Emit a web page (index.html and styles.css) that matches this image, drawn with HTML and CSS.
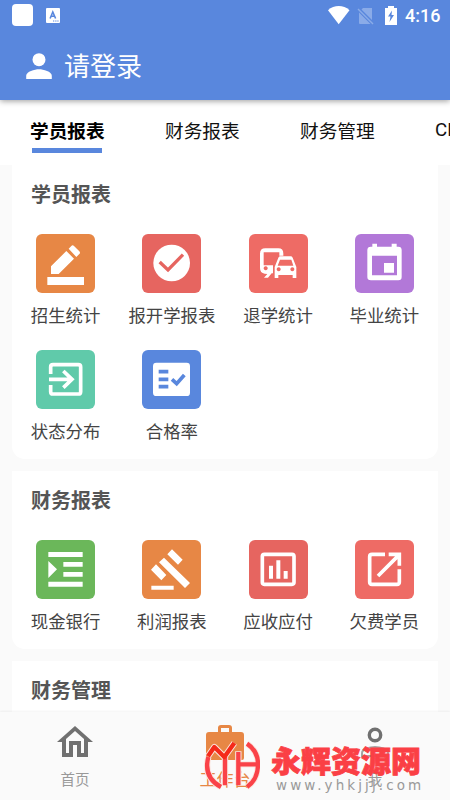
FILE: index.html
```html
<!DOCTYPE html>
<html lang="zh-CN">
<head>
<meta charset="utf-8">
<title>工作台</title>
<link rel="stylesheet" href="styles.css">
</head>
<body>
<div class="app">
  <header class="header">
    <div class="status">
      <span class="status-app"></span>
      <svg class="status-a" viewBox="0 0 14 15"><rect width="14" height="15" rx="1" fill="#fff"/><path d="M4.1 10.5 6.8 4l2.8 6.5M5 8.3h3.7" fill="none" stroke="#5987dd" stroke-width="1.6"/><path d="M7 13h1.3M9.2 13h1.3M11.3 13h1.3" stroke="#5987dd"/></svg>
      <svg class="status-icons" viewBox="0 0 70 20">
        <path d="M0 4.2C6-1.3 15.500-1.300 21.500 4.200L10.700 18.300Z" fill="#fff"/>
        <path d="M33.500 3.500 35 2H44V14ZM31 6.500 42.500 18H32q-1 0-1-1Z" fill="#8aabe8"/><path d="M30 3 45 18" stroke="#8aabe8" stroke-width="1.400"/>
        <path d="M57 2h3V0h6v2h3v17H57Z" fill="#fff"/><path d="M64 4.500 60 10.500h2.500L61.500 16l4.500-7h-2.500Z" fill="#5987dd"/>
      </svg>
      <span class="clock">4:16</span>
    </div>
    <div class="user">
      <svg class="user-icon" viewBox="0 0 26 27"><circle cx="13" cy="6.700" r="6.500" fill="#fff"/><path d="M.2 26v-3.200c0-4.300 8.500-6.500 12.800-6.500s12.800 2.200 12.800 6.500V26Z" fill="#fff"/></svg>
      <span>请登录</span>
    </div>
  </header>
  <nav class="tabs">
    <span class="tab active">学员报表</span>
    <span class="tab">财务报表</span>
    <span class="tab">财务管理</span>
    <span class="tab">CRM</span>
  </nav>
  <main class="content">
    <section class="card first">
      <h2>学员报表</h2>
      <div class="grid">
        <div class="item"><svg class="tile orange" viewBox="0 0 177 177"><path d="M34 129h110v24H34ZM45 120V97L91 51l23 23-46 46ZM98 44l8-8q4-4 8 0l16 16q4 4 0 8l-9 9Z" fill="#fff"/></svg><span>招生统计</span></div>
        <div class="item"><svg class="tile red" viewBox="0 0 177 177"><circle cx="89" cy="87" r="55" fill="#fff"/><path d="M53 84 78 108 123 62" fill="none" stroke="#e66560" stroke-width="10"/></svg><span>报开学报表</span></div>
        <div class="item"><svg class="tile coral" viewBox="0 0 177 177"><path fill-rule="evenodd" d="M103 65V59q0-16-15-16H49q-16 0-16 16v43q0 15 14 17l8 1-10 11h12l11-13h4V94H44V55h47v10ZM50 97a6 6 0 1 0 .1 0Z" fill="#fff"/><path fill-rule="evenodd" d="m88 71-11 28v33h11v-9h43v9h11V99l-11-28q-2-4-6-4H94q-4 0-6 4Zm5 6h34l6 18H86ZM89 100a6 6 0 1 0 .1 0ZM130 100a6 6 0 1 0 .1 0Z" fill="#fff"/></svg><span>退学统计</span></div>
        <div class="item"><svg class="tile purple" viewBox="0 0 177 177"><path fill-rule="evenodd" d="M52 29h14v9h44v-9h15v9h5q10 0 10 10v81q0 10-10 10H48q-11 0-11-10V48q0-10 11-10h4ZM51 65v59h75V65Z" fill="#fff"/><path d="M87 87h30v29H87Z" fill="#fff"/></svg><span>毕业统计</span></div>
        <div class="item"><svg class="tile teal" viewBox="0 0 177 177"><path d="M44 72V51q0-7 7-7h76q7 0 7 7v74q0 7-7 7H51q-7 0-7-7V105M39 88h68M82 63l26 25-26 25" fill="none" stroke="#fff" stroke-width="11"/></svg><span>状态分布</span></div>
        <div class="item"><svg class="tile blue" viewBox="0 0 177 177"><rect x="33" y="38" width="111" height="100" rx="10" fill="#fff"/><path d="M50 65h29M50 88h29M50 110h29M90 88l14 13 23-26" fill="none" stroke="#5987dd" stroke-width="11"/></svg><span>合格率</span></div>
      </div>
    </section>
    <section class="card second">
      <h2>财务报表</h2>
      <div class="grid">
        <div class="item"><svg class="tile green" viewBox="0 0 177 177"><path d="M37 36h103v15H37ZM82 66h58v14H82ZM82 96h58v14H82ZM37 125h103v15H37ZM37 63v51l26-26Z" fill="#fff"/></svg><span>现金银行</span></div>
        <div class="item"><svg class="tile orange" viewBox="0 0 177 177"><path d="M28 137h67v12H28ZM66 53l78 76-15 15L51 67ZM90 28l32 31-14 15-32-31ZM42 73l31 32-15 16-31-32Z" fill="#fff"/></svg><span>利润报表</span></div>
        <div class="item"><svg class="tile red" viewBox="0 0 177 177"><rect x="40" y="43" width="95" height="90" rx="6" fill="none" stroke="#fff" stroke-width="11"/><path d="M66 77v39M88 61v55M110 93v23" stroke="#fff" stroke-width="12"/></svg><span>应收应付</span></div>
        <div class="item"><svg class="tile coral" viewBox="0 0 177 177"><path d="M90 43H51q-7 0-7 7v76q0 7 7 7h75q7 0 7-7V88M101 43h32v34M69 108 130 47" fill="none" stroke="#fff" stroke-width="11"/></svg><span>欠费学员</span></div>
      </div>
    </section>
    <section class="card third"><h2>财务管理</h2></section>
  </main>
  <footer class="bottom">
    <div class="nav-item"><svg class="nav-icon" viewBox="0 0 36 36"><path fill-rule="evenodd" d="M18 1 36 17h-5v15H20V20h-4v12H5V17H0ZM18 6 9 14v14h3V16h12v12h3V14Z" fill="#707070"/></svg><span>首页</span></div>
    <div class="nav-item current"><svg class="nav-icon wide" viewBox="0 0 38 36"><path fill-rule="evenodd" d="M12 7V3q0-3 3-3h8q3 0 3 3v4h9q3 0 3 3v23q0 2-2 2H2q-2 0-2-2V10q0-3 3-3ZM15 3v4h8V3Z" fill="#e78745"/></svg><span>工作台</span></div>
    <div class="nav-item"><svg class="nav-icon" viewBox="0 0 36 36"><circle cx="18" cy="10" r="5.700" fill="none" stroke="#707070" stroke-width="3.400"/><path d="M5 31v-3c0-4 8-6 13-6s13 2 13 6v3Z" fill="none" stroke="#a4a4a4" stroke-width="2"/></svg><span>我</span></div>
  </footer>
  <div class="watermark">
    <svg class="wm-logo" viewBox="0 0 168 150"><g fill="none" stroke-linejoin="round"><g stroke="#fbe5df" stroke-width="19"><path d="M13 51Q-3 112 51 141M129 11q33 22 33 61 0 47-33 69M12 49 31 21 61 51 91 9M63 50v86M103 34v102M103 73h55"/></g><g stroke="#fa4248" stroke-width="13"><path d="M13 51Q-3 112 51 141M129 11q33 22 33 61 0 47-33 69M63 50v86M103 36v100M103 73h55"/><path d="M12 49 31 21 61 51 91 9" stroke="#f52a19"/></g></g></svg>
    <div class="wm-text"><strong>永辉资源网</strong><span>www.yhkjjj.com</span></div>
  </div>
</div>
</body>
</html>
```
FILE: styles.css
```css
* { box-sizing: border-box; }
body { margin: 0; font-family: Roboto, "Noto Sans CJK SC", sans-serif; }
.app { position: relative; width: 450px; height: 800px; overflow: hidden; display: flex; flex-direction: column; background: #fafafa; }
.header { position: relative; z-index: 1; height: 100px; flex: none; background: #5987dd; color: #fff; box-shadow: 0 1px 6px rgba(0,0,0,.4); }
.status { height: 32px; display: flex; align-items: center; padding: 0 10px 0 12px; }
.status-app { width: 21px; height: 22px; border-radius: 4px; background: #fff; margin-right: 13px; position: relative; top: -1px; }
.status-a { width: 14px; height: 15px; position: relative; top: -1px; }
.status-icons { width: 70px; height: 20px; margin-left: auto; margin-right: 7px; }
.clock { font-size: 18px; font-weight: 500; line-height: 32px; width: 35px; white-space: nowrap; }
.user { display: flex; align-items: center; height: 68px; padding: 1px 0 0 26px; font-size: 26px; line-height: 36px; }
.user-icon { width: 26px; height: 27px; margin: -1px 12px 0 0; }
.tabs { display: flex; flex: none; height: 65px; background: #fff; overflow: hidden; }
.tab { flex: none; width: 135px; padding-left: 30px; padding-top: 18px; font-size: 18.7px; line-height: 28px; color: #111; }
.tab:last-child { padding-top: 16px; }
.tab.active { font-weight: 700; color: #000; }
.tab.active::after { content: ""; display: block; width: 70px; height: 5px; margin: 2px 0 0 2px; background: #5987dd; }
.content { flex: 1; overflow: hidden; padding: 0 12.5px 0 12px; }
.card { background: #fff; margin-bottom: 12px; border-radius: 0 0 13px 13px; }
.first { height: 294px; }
.second { height: 178px; }
.third { height: 178px; }
h2 { margin: 0; padding: 15px 0 0 19px; font-size: 20px; line-height: 30px; font-weight: 700; color: #555; }
.grid { display: grid; grid-template-columns: repeat(4, 1fr); grid-auto-rows: 116px; padding: 24px 0 0 .5px; }
.item { display: flex; flex-direction: column; align-items: center; font-size: 17.400px; line-height: 26px; color: #444; white-space: nowrap; }
.tile { width: 59px; height: 59px; border-radius: 6px; margin-bottom: 10px; }
.orange { background: #e78745; }
.red { background: #e66560; }
.coral { background: #ee6b65; }
.purple { background: #b278d8; }
.teal { background: #60caaa; }
.blue { background: #5987dd; }
.green { background: #6bb75a; }
.bottom { position: relative; height: 88px; flex: none; display: flex; background: #fafafa; box-shadow: 0 -1px 2px rgba(0,0,0,.05); }
.nav-item { flex: 1; display: flex; flex-direction: column; align-items: center; padding-top: 13px; font-size: 14.500px; line-height: 22px; color: #999; }
.nav-icon { width: 36px; height: 36px; margin-bottom: 9px; }
.nav-icon.wide { width: 38px; margin-bottom: 8px; }
.current { color: #e78745; font-size: 17px; }
.watermark { position: absolute; left: 204px; top: 740px; display: flex; }
.wm-logo { width: 56px; height: 50px; }
.wm-text { margin-left: 11px; display: flex; flex-direction: column; white-space: nowrap; }
.wm-text strong { font-family: "Noto Sans CJK SC", sans-serif; font-size: 30px; font-weight: 900; line-height: 38px; color: #fa3f45; -webkit-text-stroke: .8px #fa3f45; }
.wm-text span { padding-left: 5px; font-family: "DejaVu Sans", sans-serif; font-size: 13.500px; line-height: 14px; letter-spacing: 3.100px; color: #999; }
```
